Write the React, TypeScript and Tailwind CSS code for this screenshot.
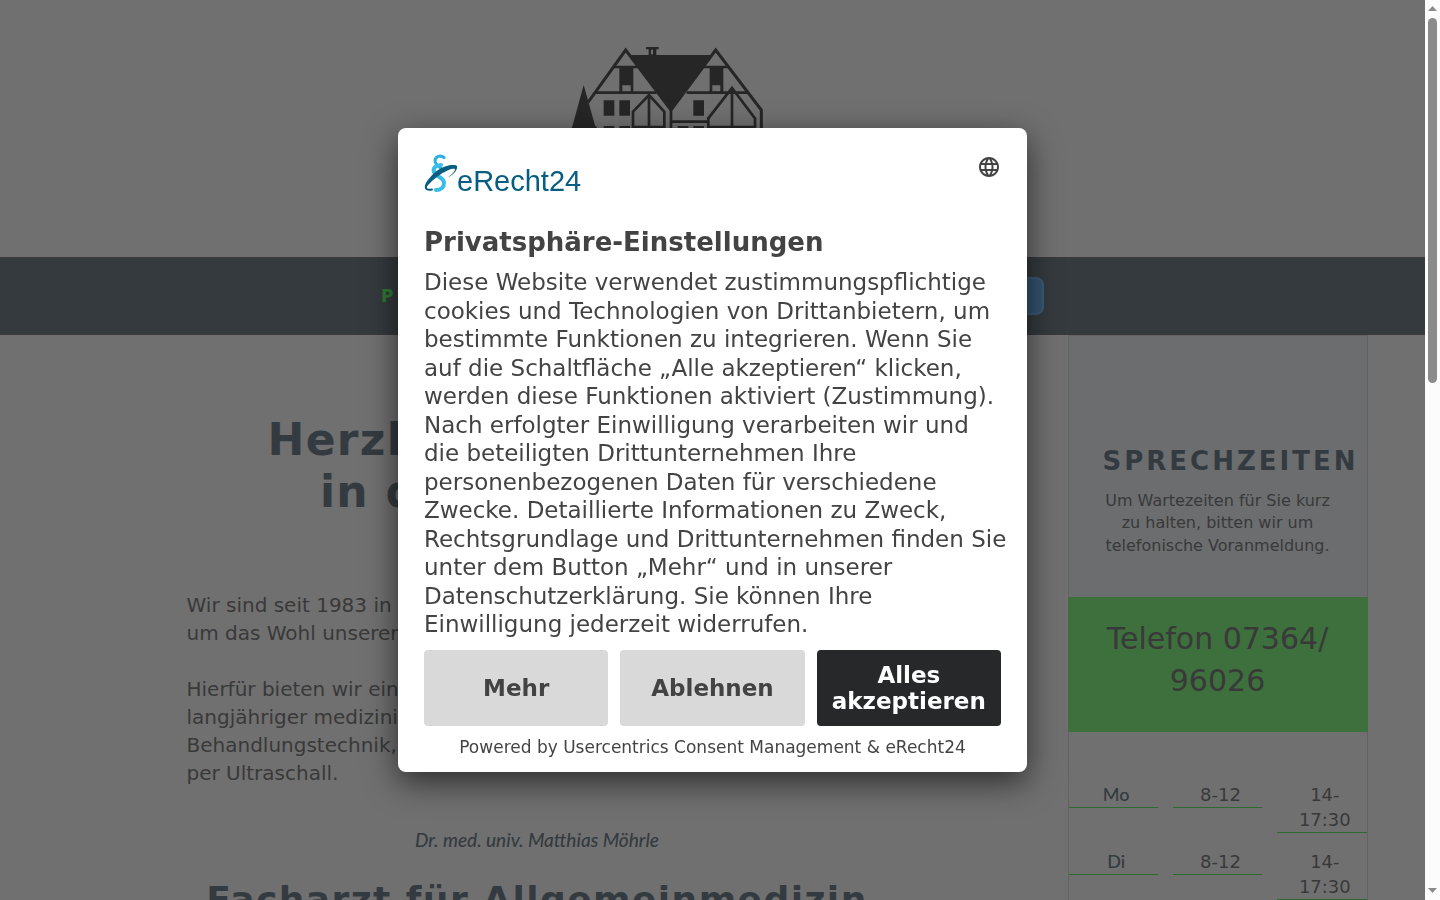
import type { ReactNode } from "react";
import { MdLanguage } from "react-icons/md";

const hours = [
  { day: "Mo", morning: "8-12", afternoon: "14-17:30" },
  { day: "Di", morning: "8-12", afternoon: "14-17:30" },
];

function House() {
  return (
    <svg viewBox="0 0 915 480" className="block h-40 w-[305px] shrink-0 self-start" role="img" aria-label="Praxis Möhrle">
      <g fill="#262626">
        <path d="M210 75H455L333 240Z" />
        <path d="M258 51h38v7h-7v20h-23V58h-8z" />
        <path d="M71 165L107 293H36Z" />
        <path d="M178 112h42v76h-42zM449 112h41v76h-41z" />
        <path d="M131 211h32v46h-32zM178 211h32v46h-32zM400 211h32v46h-32zM131 288h32v30h-32zM178 288h32v30h-32zM353 288h32v30h-32zM400 288h32v30h-32z" />
      </g>
      <path fill="#6f6f6f" d="M187 166h25v19h-25zM457 166h24v19h-24zM273 59h6v14h-6z" />
      <g fill="none" stroke="#262626" strokeWidth="9">
        <path d="M84 217L197 60L333 240M333 240L467 60L604 240V470" />
        <path strokeWidth="8" d="M162 111H235M430 111H505M105 188H290M380 188H565" />
        <path strokeWidth="8" d="M219 291V245L267 195L313 245V291ZM267 195V291M333 235V470M337 275H445M445 291V265L516 174L585 265V291ZM516 174V291M36 293H110" />
      </g>
    </svg>
  );
}

function ConsentLogo() {
  return (
    <svg viewBox="0 0 164 44" className="block h-11 w-[164px]" role="img" aria-label="eRecht24">
      <g fill="none" strokeLinecap="round">
        <path stroke="#2cb0df" strokeWidth="3" d="M20 3.500C17 1 11 2 11 7C11 11 16 13 20 17" />
        <path stroke="#36bde8" strokeWidth="4" d="M17 11C12 11 8.500 14 10 18C12 23 20 23 20 29C20 33 17 36 12 36" />
        <path stroke="#075e82" strokeWidth="2" d="M31.500 12.500C25 10 13 16 6 25C1 31 -1 37 8 35.500" />
      </g>
      <path fill="#075e82" d="M33 12C28 9 18 13 11 20C6 25 2 30 1 35C5 29 11 24 17 20C23 16 29 14 31 15C31 18 27 21 23 24C29 21 34 16 33 12Z" />
      <text x="33" y="37" fontFamily="Liberation Sans" fontSize="29" fill="#075e82">eRecht24</text>
    </svg>
  );
}

function ChoiceButton({ primary, children }: { primary?: boolean; children: ReactNode }) {
  return (
    <button
      type="button"
      className={
        primary
          ? "h-19 flex-1 rounded-sm bg-[#27282a] px-3 text-[23px] leading-[26px] font-bold text-white"
          : "h-19 flex-1 rounded-sm bg-[#d9d9d9] px-3 text-[23px] leading-[26px] font-bold text-[#434343]"
      }
    >
      {children}
    </button>
  );
}

function ConsentDialog() {
  return (
    <div className="fixed inset-y-0 right-[15px] left-0 flex items-center justify-center">
      <section
        role="dialog"
        aria-labelledby="consent-title"
        className="w-full max-w-[629px] rounded-lg bg-white px-[26px] pt-[26px] pb-3 text-[#434343] shadow-[0_10px_32px_rgba(0,0,0,0.6)]"
      >
        <div className="flex items-start justify-between">
          <ConsentLogo />
          <button type="button" aria-label="Sprache wählen" className="py-px">
            <MdLanguage className="size-6" />
          </button>
        </div>
        <h2 id="consent-title" className="mt-7 text-[26px] leading-8 font-bold">
          Privatsphäre-Einstellungen
        </h2>
        <p className="-mr-2 mt-2.5 text-[23px] leading-[1.24]">
          Diese Website verwendet zustimmungspflichtige cookies und Technologien von Drittanbietern, um bestimmte
          Funktionen zu integrieren. Wenn Sie auf die Schaltfläche „Alle akzeptieren“ klicken, werden diese Funktionen
          aktiviert (Zustimmung). Nach erfolgter Einwilligung verarbeiten wir und die beteiligten Drittunternehmen Ihre
          personenbezogenen Daten für verschiedene Zwecke. Detaillierte Informationen zu Zweck, Rechtsgrundlage und
          Drittunternehmen finden Sie unter dem Button „Mehr“ und in unserer Datenschutzerklärung. Sie können Ihre
          Einwilligung jederzeit widerrufen.
        </p>
        <div className="mt-[11px] flex gap-3">
          <ChoiceButton>Mehr</ChoiceButton>
          <ChoiceButton>Ablehnen</ChoiceButton>
          <ChoiceButton primary>Alles akzeptieren</ChoiceButton>
        </div>
        <p className="mt-2 text-center text-[17px] leading-[26px]">
          Powered by <a href="#usercentrics">Usercentrics Consent Management</a> &amp; <a href="#erecht24">eRecht24</a>
        </p>
      </section>
    </div>
  );
}

function Scrollbar() {
  return (
    <div aria-hidden="true" className="flex w-[15px] shrink-0 flex-col items-center bg-[#fcfcfc]">
      <svg viewBox="0 0 15 18" className="h-[18px] w-[15px]">
        <path d="M3 11L7.500 6L12 11Z" fill="#8b8b8b" />
      </svg>
      <div className="h-[365px] w-[9px] rounded-full bg-[#8b8b8b]" />
      <svg viewBox="0 0 15 18" className="mt-auto h-[18px] w-[15px]">
        <path d="M3 6L7.500 11L12 6Z" fill="#8b8b8b" />
      </svg>
    </div>
  );
}

export default function App() {
  return (
    <div className="flex h-screen overflow-hidden font-['DejaVu_Sans',sans-serif] text-[#393939]">
      <div className="min-w-0 flex-1 overflow-hidden bg-[#707070]">
        <header>
          <div className="flex h-[257px] justify-center pt-[30px]">
            <House />
          </div>
          <nav className="flex h-[78px] items-center justify-center bg-[#343a3e]">
            <div className="flex w-[663px] items-center justify-between text-[17px] leading-6 font-bold tracking-[3px]">
              <a href="#praxis" className="text-[#2e7a33]">PRAXIS</a>
              <a href="#termin" className="rounded-lg border-2 border-[#3c5a74] bg-[#33536f] px-6 py-[5px] text-[#707070]">TERMIN</a>
            </div>
          </nav>
        </header>
        <div className="mx-auto flex w-full max-w-[1310px] justify-between">
          <main className="ml-[129px] w-[701px] pt-[79px]">
            <h1 className="text-center text-[44px] leading-[52px] font-bold tracking-[0.03em] text-[#343b40]">
              Herzlich willkommen
              <br />
              in der Praxis der
            </h1>
            <p className="mt-[73px] text-[20px] leading-7">
              Wir sind seit 1983 in Oberkochen und sorgen uns
              <br />
              um das Wohl unserer Patienten.
            </p>
            <p className="mt-7 text-[20px] leading-7">
              Hierfür bieten wir eine Kombination aus
              <br />
              langjähriger medizinischer Erfahrung, moderner
              <br />
              Behandlungstechnik, und Diagnostik
              <br />
              per Ultraschall.
            </p>
            <p className="mt-[39px] text-center font-[Lato] text-[19px] leading-7 font-medium text-[#343b40] italic">
              Dr. med. univ. Matthias Möhrle
            </p>
            <h2 className="mt-[25px] text-center text-[36px] leading-[42px] font-bold tracking-[0.04em] text-[#343b40]">
              Facharzt für Allgemeinmedizin
            </h2>
          </main>
          <aside className="w-[300px] border border-[#626262]">
            <div className="h-[261px] bg-[#6b6d6f] px-[34px] pt-[104px] text-center">
              <h2 className="text-[26px] leading-[42px] font-bold tracking-[3px] text-[#343b40]">SPRECHZEITEN</h2>
              <p className="mt-2 text-base leading-[1.4]">Um Wartezeiten für Sie kurz zu halten, bitten wir um telefonische Voranmeldung.</p>
            </div>
            <div className="-mx-px h-[135px] bg-[#3d703d] px-8 pt-[21px] text-center text-[30px] leading-[42px]">
              Telefon 07364/ 96026
            </div>
            <table className="mt-[50px] block text-[18px] leading-[25px]">
              <tbody className="block">
                {hours.map((row) => (
                  <tr key={row.day} className="mb-4 grid grid-cols-3 items-start gap-[15px] text-center">
                    <th scope="row" className="border-b border-[#2c6b30] pl-1.5 font-[Lato] font-medium text-[#343b40]">
                      {row.day}
                    </th>
                    <td className="border-b border-[#2c6b30] pl-1.5">{row.morning}</td>
                    <td className="border-b border-[#2c6b30] pr-3 pl-4.5">{row.afternoon}</td>
                  </tr>
                ))}
              </tbody>
            </table>
          </aside>
        </div>
      </div>
      <Scrollbar />
      <ConsentDialog />
    </div>
  );
}
